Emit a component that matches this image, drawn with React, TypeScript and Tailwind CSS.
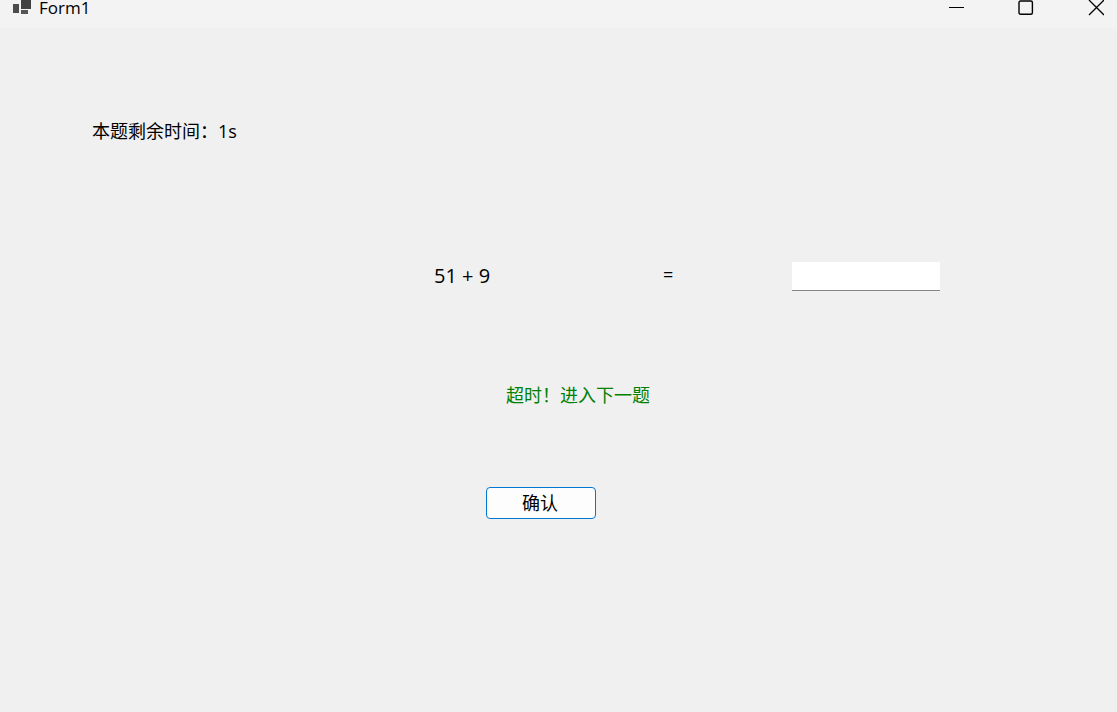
export default function App() {
  return (
    <div className="flex min-h-screen flex-col bg-[#f0f0f0] font-['Open_Sans','Noto_Sans_CJK_SC',sans-serif] text-lg leading-6 text-black">
      <header className="flex h-7 items-start justify-between bg-[#f3f3f3]">
        <div className="flex items-start gap-[7px] pl-3">
          <svg width="20" height="16" viewBox="0 0 20 16" aria-hidden="true">
            <rect x="9" y="0" width="10" height="9" fill="#404040" />
            <rect x="1" y="4" width="6" height="9" fill="#4c4c4c" />
            <rect x="9" y="10" width="7" height="4" fill="#555" />
          </svg>
          <h1 className="text-[17px] leading-4">Form1</h1>
        </div>
        <div className="flex gap-[54px] pr-[13px]">
          <button type="button" aria-label="Minimize">
            <svg width="16" height="16" viewBox="0 0 16 16" fill="none" stroke="#000"><path d="M1 7.5h15" /></svg>
          </button>
          <button type="button" aria-label="Maximize">
            <svg width="16" height="16" viewBox="0 0 16 16" fill="none" stroke="#000" strokeWidth="1.4"><rect x="1" y="1" width="13.4" height="13.2" rx="1.5" /></svg>
          </button>
          <button type="button" aria-label="Close">
            <svg width="16" height="16" viewBox="0 0 16 16" fill="none" stroke="#000" strokeWidth="1.3"><path d="M1 0l15 15M16 0L1 15" /></svg>
          </button>
        </div>
      </header>
      <main className="flex flex-col">
        <p className="mt-[91px] ml-[92px]">本题剩余时间：1s</p>
        <div className="mt-[119px] flex items-start pl-[434px]">
          <label htmlFor="answer" className="w-[229px] text-xl leading-7">51 + 9</label>
          <span className="w-[129px] leading-6">=</span>
          <input id="answer" type="text" className="h-[29px] w-[148px] border-b border-[#868686] bg-white px-1 outline-none" />
        </div>
        <p role="status" className="mt-[92px] ml-[506px] text-[#008000]">超时！进入下一题</p>
        <button type="button" className="mt-20 ml-[486px] h-8 w-[110px] rounded border border-[#0078d4] bg-[#fdfdfd] pr-0.5">确认</button>
      </main>
    </div>
  );
}
